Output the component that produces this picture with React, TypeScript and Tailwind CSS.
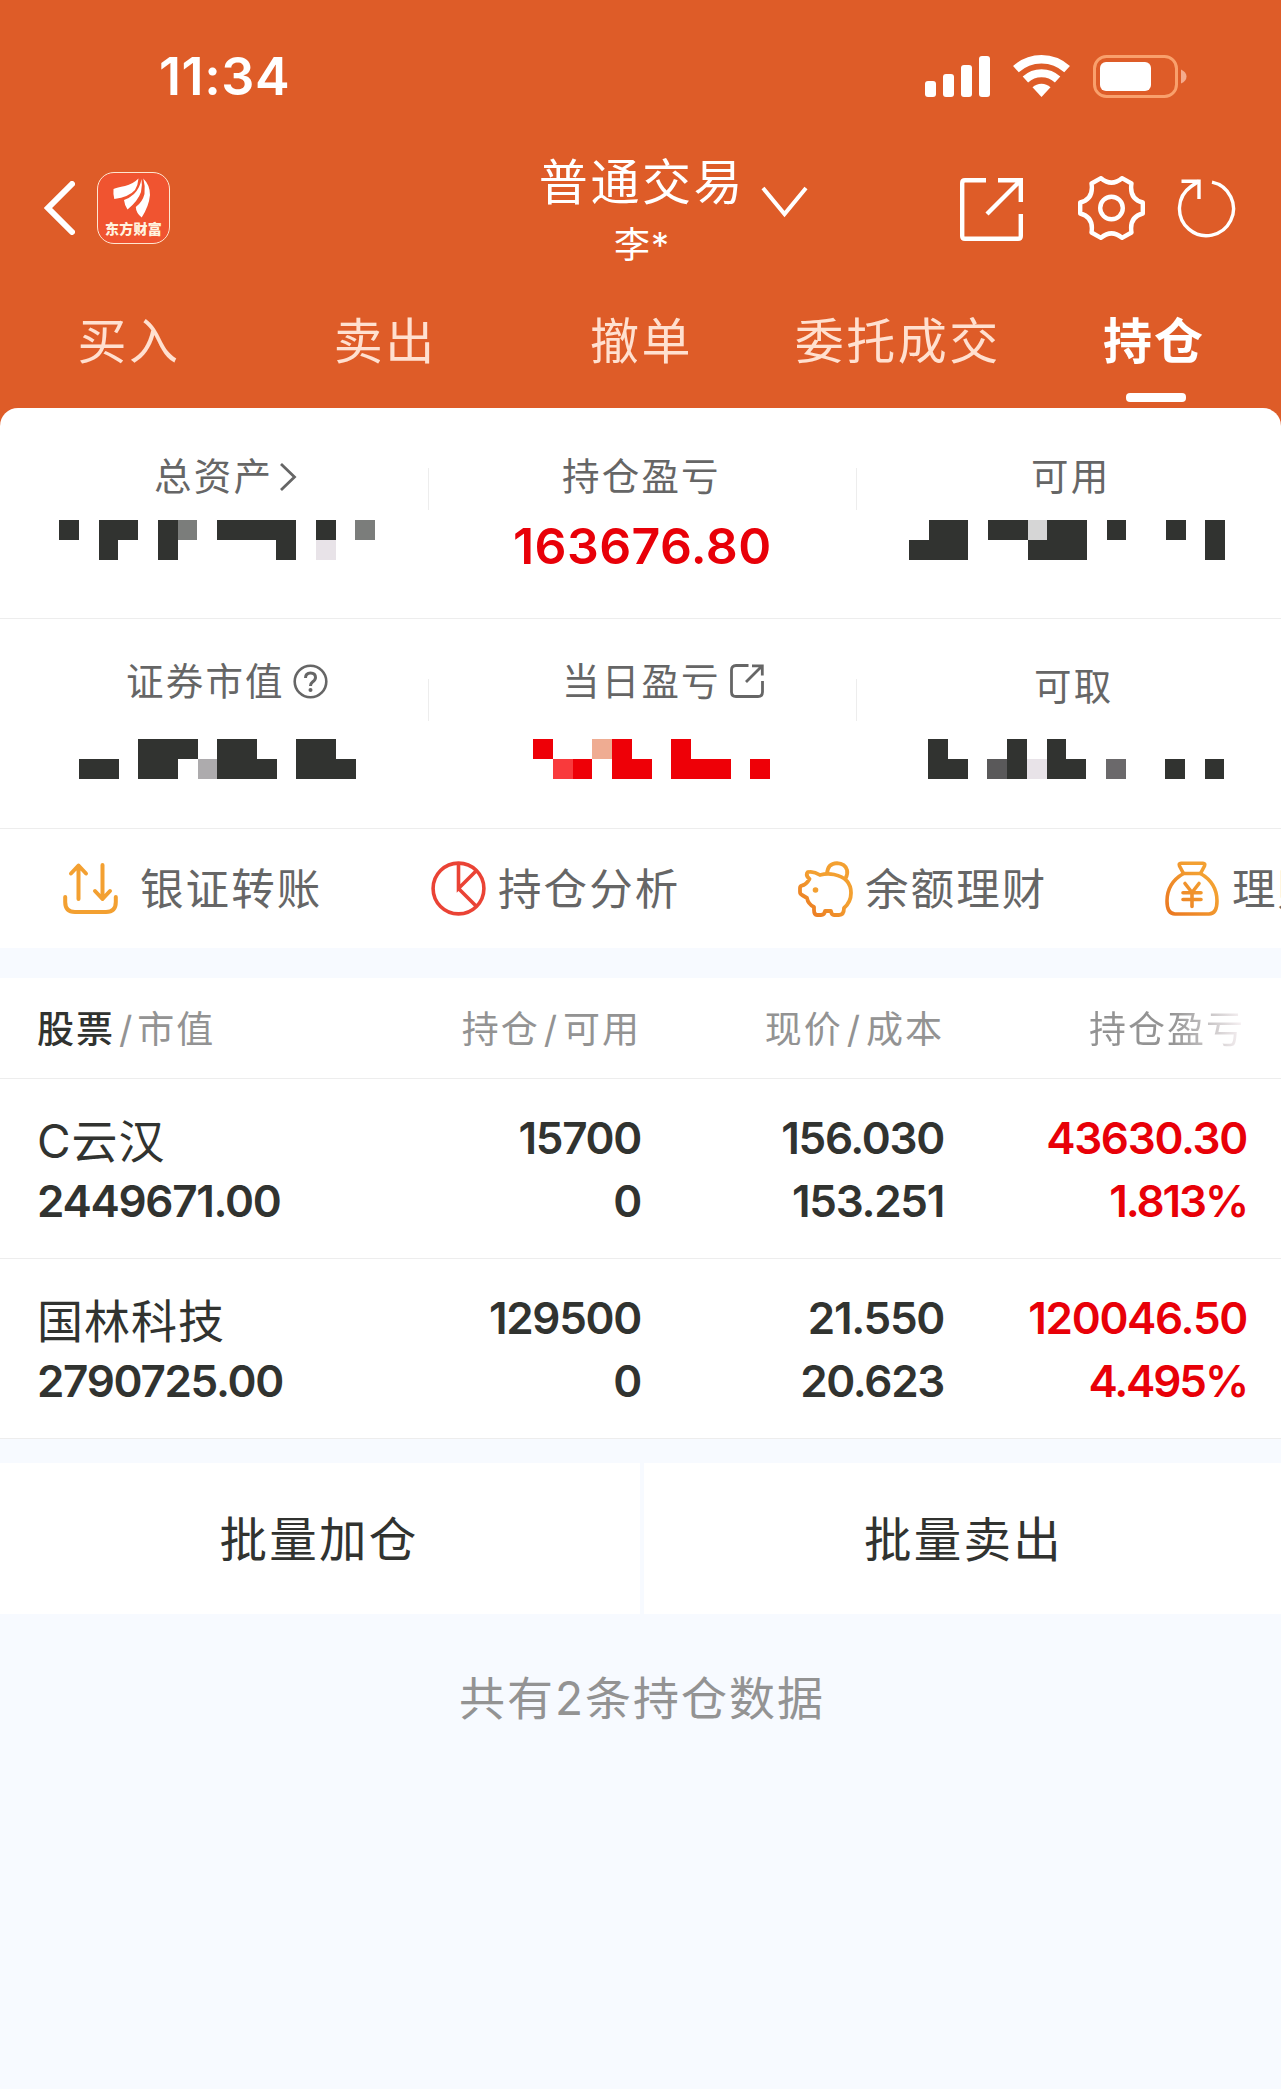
import React from "react";

const COLORS: Record<string, string> = {
  "#": "#313330",
  g: "#7b7d7b",
  d: "#5a595a",
  m: "#6b696b",
  s: "#adabad",
  w: "#d6d6d6",
  l: "#e8e3e8",
  R: "#ee0007",
  r: "#f93a3c",
  p: "#efac92",
};

const CELL = 19.75;

// masked amounts, one character per block
const Mosaic = ({ rows }: { rows: string[] }) => (
  <svg width={rows[0].length * CELL} height={40} shapeRendering="crispEdges" className="block">
    {rows.map((row, y) =>
      row.split("").map((c, x) =>
        c === "." ? null : (
          <rect key={`${x}-${y}`} x={x * CELL} y={y * 20} width={CELL} height={20} fill={COLORS[c]} />
        )
      )
    )}
  </svg>
);

const StatusBar = () => (
  <div className="flex h-[152px] items-center justify-between pl-[159px] pr-[94px]">
    <span className="pt-[2px] text-[52px] font-semibold leading-[60px] tracking-[0.600px]">11:34</span>
    <div className="flex items-center">
      <svg width="65" height="42" viewBox="0 0 65 42" fill="#fff">
        <rect x="0" y="26" width="11" height="16" rx="3" />
        <rect x="18" y="19" width="11" height="23" rx="3" />
        <rect x="36" y="10" width="11" height="32" rx="3" />
        <rect x="54" y="1" width="11" height="41" rx="3" />
      </svg>
      <svg className="ml-[23px]" width="57" height="42" viewBox="0 0 57 42" fill="none" stroke="#fff">
        <path d="M2.9 14.2A37.8 37.8 0 0 1 54.1 14.2" strokeWidth="8.4" />
        <path d="M12.4 24.5A23.8 23.8 0 0 1 44.6 24.5" strokeWidth="8" />
        <path d="M28.5 42L19.5 32.2A13.3 13.3 0 0 1 37.5 32.2Z" fill="#fff" stroke="none" />
      </svg>
      <svg className="ml-[23px]" width="94" height="43" viewBox="0 0 94 43" fill="none">
        <rect x="1.5" y="1.5" width="82" height="40" rx="12" stroke="#f9a06c" strokeWidth="3" />
        <rect x="7" y="7" width="51" height="29" rx="6" fill="#fff" />
        <path d="M88 14.500Q93.500 17 93.500 21.500Q93.500 26 88 28.500Z" fill="#f5ab8d" />
      </svg>
    </div>
  </div>
);

const Logo = () => (
  <div className="ml-[22px] flex h-[72px] w-[73px] flex-col items-center rounded-[17px] border-[1.5px] border-[#ffe6d0] bg-[#f05430]">
    <svg width="73" height="46" viewBox="0 0 73 46" fill="#fff" className="mt-[-1px] shrink-0">
      <path d="M41.500 6.500Q36 12 28 14Q20 15.500 16.500 17Q16 22 17.300 27Q32 25 38 18Q41 13 41.500 6.500Z" />
      <path d="M44.500 7Q43 16 37 22Q32 26.500 27 28Q27.500 33 30.500 37.500Q41 29 44 20Q45.500 13 44.500 7Z" />
      <path d="M46.300 6.500Q53 13 53 23Q52 34 44.700 45.500Q39 41 38.800 35Q45.500 30 47.500 22Q48.500 14 46.300 6.500Z" />
    </svg>
    <span className="mt-[3px] whitespace-nowrap text-[14px] font-black leading-[16px] tracking-[0.300px] text-[#fff3df]">东方财富</span>
  </div>
);

const NavBar = () => (
  <div className="grid h-[110px] grid-cols-[541px_202px_1fr]">
    <div className="flex items-center pb-[2px] pl-[44px]">
      <svg width="31" height="54" viewBox="0 0 31 54" fill="none" stroke="#fff" strokeWidth="6">
        <path d="M28 3L4 27L28 51" strokeLinecap="round" />
      </svg>
      <Logo />
    </div>
    <div className="flex flex-col items-center pt-[1px]">
      <h1 className="whitespace-nowrap text-[49px] leading-[60px] tracking-[2.600px]">普通交易</h1>
      <p className="mt-[12px] text-[36px] leading-[40px] tracking-[1px]">李*</p>
    </div>
    <div className="flex items-center pb-[2px]">
      <svg className="ml-[18px] mt-[-12px]" width="47" height="32" viewBox="0 0 47 32" fill="none" stroke="#fff" strokeWidth="4">
        <path d="M2 2L23.500 28L45 2" />
      </svg>
      <svg className="ml-[152px] mt-[3px]" width="63" height="63" viewBox="0 0 63 63" fill="none" stroke="#fff" strokeWidth="4.400">
        <path d="M26 2.200H5Q2.200 2.200 2.200 5V58Q2.200 60.800 5 60.800H58Q60.800 60.800 60.800 58V36" />
        <path d="M38 2.200H60.800V24M60.800 2.200L27 36" />
      </svg>
      <svg className="ml-[55px]" width="67" height="64" viewBox="0 0 67 64" fill="none" stroke="#fff" strokeWidth="4.400" strokeLinejoin="round">
        <path d="M23 2.200Q33.500 11 44 2.200L53.500 7.500Q51 23 64.800 26.500V37.500Q51 41 53.500 56.500L44 61.800Q33.500 53 23 61.800L13.500 56.500Q16 41 2.200 37.500V26.500Q16 23 13.500 7.500Z" />
        <circle cx="33.500" cy="32" r="11.300" />
      </svg>
      <svg className="ml-[31px]" width="60" height="62" viewBox="0 0 60 62" fill="none" stroke="#fff" strokeWidth="3.400">
        <path d="M36 5.200A27 27 0 1 1 15 9.500L23 4" />
        <path d="M5.500 4.300H23V22" />
      </svg>
    </div>
  </div>
);

const tabs = ["买入", "卖出", "撤单", "委托成交", "持仓"];

const Tabs = () => (
  <div className="grid h-[146px] grid-cols-5 pt-[52px]">
    {tabs.map((tab) => {
      const active = tab === "持仓";
      return (
        <div key={tab} className="flex flex-col items-center pl-[2px]">
          <span
            className={
              active
                ? "whitespace-nowrap text-[49px] font-bold leading-[56px] tracking-[2px]"
                : "whitespace-nowrap text-[49px] leading-[56px] tracking-[2.500px] text-[#ffe0d0]"
            }
          >
            {tab}
          </span>
          {active && <div className="ml-[4px] mt-[23px] h-[9px] w-[60px] rounded-[4px] bg-white" />}
        </div>
      );
    })}
  </div>
);

const label =
  "relative top-px flex items-center whitespace-nowrap text-[37.5px] leading-[40px] tracking-[2.200px] text-[#666]";

const Divider = () => <div className="mt-[60px] h-[42px] w-px shrink-0 bg-[#ededed]" />;

const Summary = () => (
  <div className="rounded-t-[18px] bg-white">
    <div className="flex h-[211px] border-b border-[#ededed]">
      <div className="w-[428px] pt-[48px]">
        <div className={`${label} pl-[154px]`}>
          总资产
          <svg className="ml-[6px]" width="18" height="28" viewBox="0 0 18 28" fill="none" stroke="#666" strokeWidth="2.800">
            <path d="M2 1L15.500 14L2 27" />
          </svg>
        </div>
        <div className="mt-[24px] pl-[59px]">
          <Mosaic rows={["#.##.#g.####.#.g", "..#..#.....#.l.."]} />
        </div>
      </div>
      <Divider />
      <div className="w-[427px] pt-[48px]">
        <div className={`${label} pl-[133px]`}>持仓盈亏</div>
        <div className="mt-[30px] pl-[84px] text-[50px] font-semibold leading-[40px] tracking-[0.400px] text-[#e80008]">163676.80</div>
      </div>
      <Divider />
      <div className="flex-1 pt-[48px]">
        <div className={`${label} pl-[174px]`}>可用</div>
        <div className="mt-[24px] pl-[52px]">
          <Mosaic rows={[".##.##w##.#..#.#", "###...###......#"]} />
        </div>
      </div>
    </div>
    <div className="flex h-[210px] border-b border-[#ededed]">
      <div className="w-[428px] pt-[42px]">
        <div className={`${label} pl-[126px]`}>
          证券市值
          <svg className="ml-[8px] mt-[-2px]" width="35" height="35" viewBox="0 0 35 35" fill="none" stroke="#666" strokeWidth="2.600">
            <circle cx="17.500" cy="17.500" r="15.800" />
            <path d="M12.500 14Q12.500 9 17.500 9Q22.500 9 22.500 13.500Q22.500 16 19.500 18Q17.500 19.500 17.500 22" strokeWidth="3" />
            <circle cx="17.500" cy="26" r="2" fill="#666" stroke="none" />
          </svg>
        </div>
        <div className="mt-[38px] pl-[79px]">
          <Mosaic rows={["...###.##..##.", "##.##.s###.###"]} />
        </div>
      </div>
      <Divider />
      <div className="w-[427px] pt-[42px]">
        <div className={`${label} pl-[133px]`}>
          当日盈亏
          <svg className="ml-[9px] mt-[-2px]" width="34" height="34" viewBox="0 0 34 34" fill="none" stroke="#666" strokeWidth="2.800">
            <path d="M18.500 1.500H6Q1.500 1.500 1.500 6V28Q1.500 32.500 6 32.500H28Q32.500 32.500 32.500 28V17" />
            <path d="M22 1.800H32.300V11.500M32 2L16 18" />
          </svg>
        </div>
        <div className="mt-[38px] pl-[104px]">
          <Mosaic rows={["R..pR..R....", ".rR.RR.RRR.R"]} />
        </div>
      </div>
      <Divider />
      <div className="flex-1 pt-[47px]">
        <div className={`${label} pl-[177px]`}>可取</div>
        <div className="mt-[33px] pl-[71px]">
          <Mosaic rows={["#...#.#........", "##.d#l##.m..#.#"]} />
        </div>
      </div>
    </div>
  </div>
);

const TransferIcon = () => (
  <svg width="55" height="54" viewBox="0 0 55 54" fill="none" stroke="#f3a031" strokeWidth="4" strokeLinecap="round" strokeLinejoin="round">
    <path d="M2.200 35V40Q2.200 50 12 50H43Q52.800 50 52.800 40V35" />
    <path d="M15.500 37V4M8 11.500L15.500 3.500L23 11.500M39.500 3V37M32 29L39.500 37L47 29" />
  </svg>
);

const PieIcon = () => (
  <svg width="55" height="55" viewBox="0 0 55 55" fill="none" stroke="#ea4335" strokeWidth="3.600">
    <circle cx="27.500" cy="27.500" r="25.400" />
    <path d="M27.500 2V27.500L45.500 9.500M27.500 27.500L45.500 45.500" />
  </svg>
);

const PigIcon = () => (
  <svg width="55" height="56" viewBox="0 0 55 56" fill="none" stroke="#f3a031" strokeWidth="3.800" strokeLinejoin="round">
    <defs>
      <linearGradient id="pig" x1="0" y1="1" x2="0.600" y2="0.400">
        <stop offset="0" stopColor="#ea7520" />
        <stop offset="1" stopColor="#f3a031" />
      </linearGradient>
    </defs>
    <path
      stroke="url(#pig)"
      d="M10.500 11Q16 10 22 14Q29 12 36 13.500Q53 17 53 32Q53 41 46 47Q46 54 41 54H36Q33.500 54 33 50H27Q26.500 54 23 54H19Q16 54 16 49V46Q10 43 9 37L4 34Q2 33 2 31V27Q2 25 4 24.500Q8 24 11.500 18Q8 15 9 12Q9.500 11 10.500 11Z"
    />
    <path d="M29 13Q29.500 2.500 39 2.200Q47 2.500 49 9Q50 13 47.500 17.500" />
    <circle cx="17.500" cy="29" r="2.800" fill="#f3a031" stroke="none" />
  </svg>
);

const BagIcon = () => (
  <svg width="54" height="55" viewBox="0 0 54 55" fill="none" stroke="url(#bag)" strokeWidth="3.600" strokeLinecap="round" strokeLinejoin="round">
    <defs>
      <linearGradient id="bag" x1="0" y1="55" x2="40" y2="20" gradientUnits="userSpaceOnUse">
        <stop offset="0" stopColor="#ea7520" />
        <stop offset="1" stopColor="#f3a031" />
      </linearGradient>
    </defs>
    <path d="M16 2.200H38Q40.500 2.200 39.500 5L35.500 12.500H18.500L14.500 5Q13.500 2.200 16 2.200Z" />
    <path d="M18.500 12.500Q2 22 2 40Q2 53 10 53H44Q52 53 52 40Q52 22 35.500 12.500" />
    <path d="M20 22.500L27 31.500L34 22.500M18 31.700H36M18 38.500H36M27 31.700V45.500" />
  </svg>
);

const action = "whitespace-nowrap text-[43.5px] leading-[50px] tracking-[2.100px] text-[#666]";

const Actions = () => (
  <div className="flex h-[119px] items-center overflow-hidden bg-white pl-[63px]">
    <div className="flex w-[368px] shrink-0 items-center gap-[22px]">
      <TransferIcon />
      <span className={action}>银证转账</span>
    </div>
    <div className="flex w-[367px] shrink-0 items-center gap-[12px]">
      <PieIcon />
      <span className={action}>持仓分析</span>
    </div>
    <div className="flex w-[367px] shrink-0 items-center gap-[12px]">
      <PigIcon />
      <span className={action}>余额理财</span>
    </div>
    <div className="flex shrink-0 items-center gap-[13px]">
      <BagIcon />
      <span className={action}>理财</span>
    </div>
  </div>
);

const holdings = [
  { name: "C云汉", value: "2449671.00", amount: "15700", usable: "0", price: "156.030", cost: "153.251", profit: "43630.30", rate: "1.813%" },
  { name: "国林科技", value: "2790725.00", amount: "129500", usable: "0", price: "21.550", cost: "20.623", profit: "120046.50", rate: "4.495%" },
];

const cols = "grid grid-cols-[300px_304px_303px_303px] pl-[37px]";

const Holdings = () => (
  <div className="mt-[30px] bg-white">
    <div className={`${cols} h-[101px] items-center whitespace-nowrap border-b border-[#ededed] pt-[3px] text-[37px] leading-[44px] tracking-[2px] text-[#939393]`}>
      <div className="flex">
        <span className="font-medium text-[#313330]">股票</span>
        <span className="pl-[4px] pr-[3px]">/</span>
        市值
      </div>
      <div className="text-right">
        持仓<span className="px-[4px]">/</span>可用
      </div>
      <div className="text-right">
        现价<span className="px-[4px]">/</span>成本
      </div>
      <div className="bg-linear-to-r from-[#939393] from-75% to-[#f6f0f2] to-98% bg-clip-text pr-[2px] text-right text-transparent">持仓盈亏</div>
    </div>
    {holdings.map((item) => (
      <div
        key={item.name}
        className={`${cols} h-[180px] border-b border-[#ededed] pt-[28px] text-right text-[44px] font-semibold leading-[63px] tracking-[-1.300px] text-[#313330]`}
      >
        <div className="text-left">
          <div className="pt-[5px] text-[46px] font-normal leading-[58px] tracking-[1px]">{item.name}</div>
          <div>{item.value}</div>
        </div>
        <div>
          <div>{item.amount}</div>
          <div>{item.usable}</div>
        </div>
        <div>
          <div>{item.price}</div>
          <div>{item.cost}</div>
        </div>
        <div className="text-[#e80008]">
          <div>{item.profit}</div>
          <div className="tracking-[-2.100px]">{item.rate}</div>
        </div>
      </div>
    ))}
  </div>
);

const App = () => {
  return (
    <div
      lang="zh-CN"
      className="min-h-[2089px] w-[1281px] overflow-hidden bg-[#f7faff] font-['Inter','Noto_Sans_CJK_SC',sans-serif]"
    >
      <div className="bg-[#de5c28] text-white">
        <StatusBar />
        <NavBar />
        <Tabs />
        <Summary />
      </div>
      <Actions />
      <Holdings />
      <div className="mt-[24px] flex gap-[4px] text-[47.5px] leading-[60px] text-[#313330]">
        <button className="h-[151px] w-[640px] bg-white pr-[2px] pt-[3px] tracking-[2.300px]">批量加仓</button>
        <button className="h-[151px] flex-1 bg-white pl-[2px] pt-[3px] tracking-[2.300px]">批量卖出</button>
      </div>
      <p className="mt-[54px] pl-[3px] text-center text-[46px] leading-[60px] tracking-[2px] text-[#939393]">共有2条持仓数据</p>
    </div>
  );
};

export default App;
